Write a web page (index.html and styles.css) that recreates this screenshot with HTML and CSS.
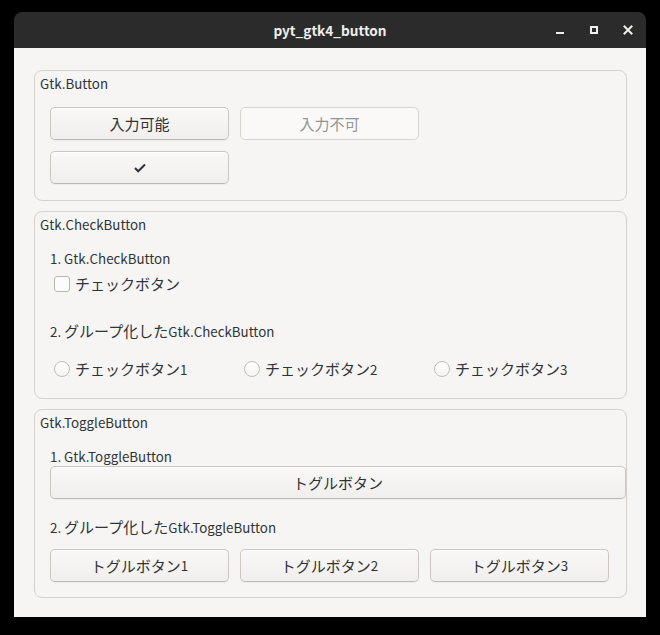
FILE: index.html
```html
<!DOCTYPE html>
<html lang="ja">
<head>
<meta charset="utf-8">
<title>pyt_gtk4_button</title>
<link rel="stylesheet" href="styles.css">
</head>
<body>
<div class="window">
  <header class="titlebar">
    <span class="spacer"></span>
    <span class="title">pyt_gtk4_button</span>
    <div class="controls">
      <span class="ctl"><svg width="16" height="16" viewBox="0 0 16 16"><rect x="4" y="10" width="8" height="2" fill="#eeeeec"/></svg></span>
      <span class="ctl"><svg width="16" height="16" viewBox="0 0 16 16"><rect x="5" y="5" width="6" height="6" fill="none" stroke="#eeeeec" stroke-width="2"/></svg></span>
      <span class="ctl"><svg width="16" height="16" viewBox="0 0 16 16"><path d="M4.5 4.5 L11.5 11.5 M11.5 4.5 L4.5 11.5" stroke="#eeeeec" stroke-width="2" stroke-linecap="square"/></svg></span>
    </div>
  </header>
  <main class="content">
    <section class="frame frame-1">
      <div class="frame-label">Gtk.Button</div>
      <div class="frame-body body-1">
        <div class="grid2">
          <button class="btn"><span class="ja">入力可能</span></button>
          <button class="btn" disabled><span class="ja">入力不可</span></button>
          <button class="btn"><svg class="check-icon" width="12" height="10" viewBox="0 0 12 10"><path d="M1 5 L4.2 8.3 L11 1.5" fill="none" stroke="#2e3436" stroke-width="2"/></svg></button>
        </div>
      </div>
    </section>

    <section class="frame frame-2">
      <div class="frame-label">Gtk.CheckButton</div>
      <div class="frame-body body-2">
        <div class="sub-label">1. Gtk.CheckButton</div>
        <label class="check-row">
          <span class="checkbox"></span>
          <span class="check-text"><span class="ja">チェックボタン</span></span>
        </label>
        <div class="sub-label sub-2">2. <span class="ja">グループ化した</span>Gtk.CheckButton</div>
        <div class="grid3 radio-row">
          <label class="check-row"><span class="radio"></span><span class="check-text"><span class="ja">チェックボタン</span>1</span></label>
          <label class="check-row"><span class="radio"></span><span class="check-text"><span class="ja">チェックボタン</span>2</span></label>
          <label class="check-row"><span class="radio"></span><span class="check-text"><span class="ja">チェックボタン</span>3</span></label>
        </div>
      </div>
    </section>

    <section class="frame frame-3">
      <div class="frame-label">Gtk.ToggleButton</div>
      <div class="frame-body body-3">
        <div class="sub-label">1. Gtk.ToggleButton</div>
        <button class="btn btn-wide"><span class="ja">トグルボタン</span></button>
        <div class="sub-label sub-t2">2. <span class="ja">グループ化した</span>Gtk.ToggleButton</div>
        <div class="grid3 toggle-row">
          <button class="btn"><span class="ja">トグルボタン</span>1</button>
          <button class="btn"><span class="ja">トグルボタン</span>2</button>
          <button class="btn"><span class="ja">トグルボタン</span>3</button>
        </div>
      </div>
    </section>
  </main>
</div>
</body>
</html>
```

FILE: styles.css
```css
* { box-sizing: border-box; }

html, body {
  margin: 0;
  padding: 0;
  background: #000;
}

body {
  font-family: "Noto Sans CJK JP", "Noto Sans", sans-serif;
  font-size: 13.333px;
  line-height: 17px;
  color: #2e3436;
}

.ja { font-size: 15px; }

.window {
  margin: 12px 0 0 14px;
  width: 632px;
  height: 605px;
  display: flex;
  flex-direction: column;
}

.titlebar {
  height: 36px;
  flex: none;
  background: #2b2b2b;
  border-radius: 8px 8px 0 0;
  display: grid;
  grid-template-columns: 1fr auto 1fr;
  align-items: center;
  color: #eeeeec;
}

.title {
  font-weight: bold;
  font-size: 13.6px;
  line-height: 17px;
}

.controls {
  display: flex;
  justify-content: flex-end;
  gap: 18px;
  padding-right: 10px;
}

.ctl {
  width: 16px;
  height: 16px;
  display: block;
}
.ctl svg { display: block; }

.content {
  flex: 1;
  background: #f6f5f4;
  padding: 22px 19px 0 20px;
  display: flex;
  flex-direction: column;
  gap: 10px;
}

.frame {
  border: 1px solid #d6d1cd;
  border-radius: 8px;
}
.frame-1 { height: 131px; }
.frame-2 { height: 188px; }
.frame-3 { height: 189px; }

.frame-label {
  margin: 4px 0 0 5px;
}

.frame-body {
  padding-left: 15px;
}

.body-1 { padding-top: 15px; }

.grid2 {
  display: grid;
  grid-template-columns: 179px 179px;
  gap: 11px;
}

.grid3 {
  display: grid;
  grid-template-columns: 179px 179px 179px;
  gap: 11px;
}

.btn {
  font: inherit;
  line-height: 17px;
  color: #2e3436;
  height: 33px;
  padding: 0 8px;
  border: 1px solid #cdc7c2;
  border-bottom-color: #c0b9b2;
  border-radius: 5px;
  background: linear-gradient(#f9f8f7, #f1efee);
  box-shadow: inset 0 1px rgba(255,255,255,0.8), 0 1px 1px rgba(0,0,0,0.04);
  display: flex;
  align-items: center;
  justify-content: center;
}

.btn:disabled {
  color: #929595;
  border-color: #d8d4d0;
  background: #faf9f8;
  box-shadow: none;
}

.check-icon { display: block; margin-top: 1px; }

.body-2 { padding-top: 17px; }

.check-row {
  height: 33px;
  display: flex;
  align-items: center;
}

.checkbox {
  width: 16px;
  height: 16px;
  margin-left: 4px;
  border: 1px solid #bcb6b0;
  border-radius: 3px;
  background: #fcfcfc;
  flex: none;
}

.radio {
  width: 16px;
  height: 16px;
  margin-left: 4px;
  border: 1px solid #c3bdb7;
  border-radius: 50%;
  background: linear-gradient(#ffffff, #f4f3f2);
  flex: none;
}

.check-text {
  margin-left: 5px;
}

.sub-2 { margin-top: 22px; }
.radio-row { margin-top: 12px; }

.body-3 { padding-top: 17px; }

.btn-wide { width: 576px; margin-top: 1px; }

.sub-t2 { margin-top: 19px; }
.toggle-row { margin-top: 13px; }
```
